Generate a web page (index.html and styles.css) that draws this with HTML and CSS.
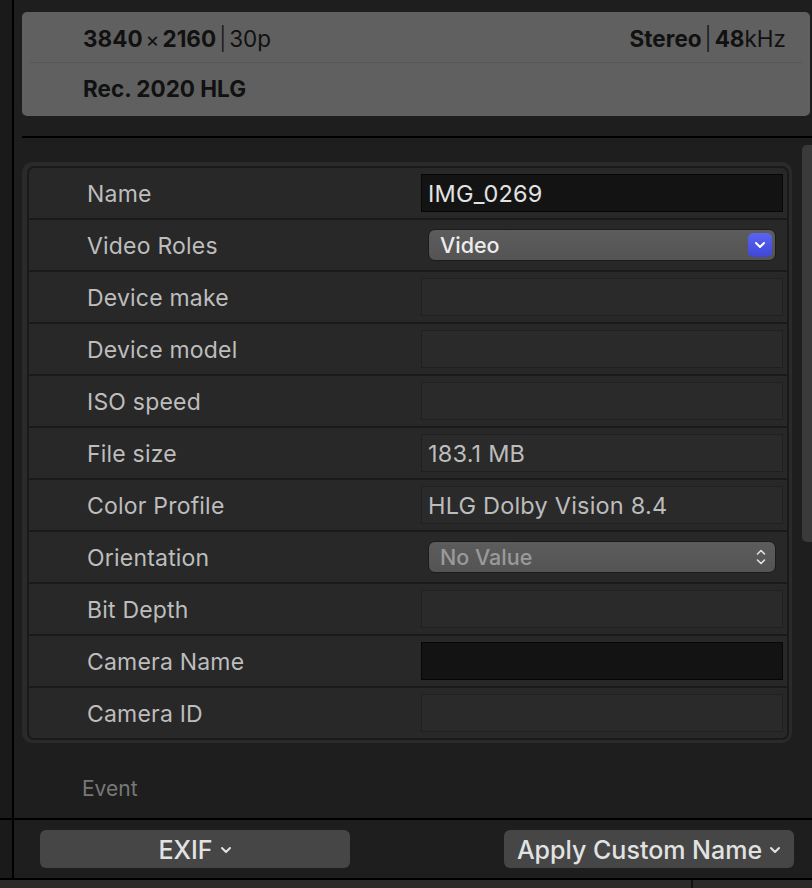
FILE: index.html
```html
<!DOCTYPE html>
<html lang="en">
<head>
    <meta charset="UTF-8">
    <meta name="viewport" content="width=device-width, initial-scale=1.0">
    <title>Inspector</title>
    <link rel="stylesheet" href="styles.css">
</head>
<body>
    <div class="top">
        <div class="side"></div>
        <div class="content">
            <div class="info">
                <div class="info-row">
                    <span><b>3840</b><span class="times">×</span><b>2160</b><span class="bar">|</span>30p</span>
                    <span><b>Stereo</b><span class="bar">|</span><b>48</b>kHz</span>
                </div>
                <div class="info-row">
                    <span><b>Rec. 2020 HLG</b></span>
                </div>
            </div>
            <div class="divider"></div>

            <div class="inspector">
                <div class="table">
                    <div class="rows">
                        <div class="row">
                            <div class="label">Name</div>
                            <div class="value"><div class="field dark">IMG_0269</div></div>
                        </div>
                        <div class="row">
                            <div class="label">Video Roles</div>
                            <div class="value">
                                <div class="popup">
                                    <span class="popup-text">Video</span>
                                    <span class="blue-btn">
                                        <svg width="12" height="8" viewBox="0 0 12 8"><path d="M2 2 L6 6 L10 2" fill="none" stroke="#fff" stroke-width="2" stroke-linecap="round" stroke-linejoin="round"/></svg>
                                    </span>
                                </div>
                            </div>
                        </div>
                        <div class="row">
                            <div class="label">Device make</div>
                            <div class="value"><div class="field"></div></div>
                        </div>
                        <div class="row">
                            <div class="label">Device model</div>
                            <div class="value"><div class="field"></div></div>
                        </div>
                        <div class="row">
                            <div class="label">ISO speed</div>
                            <div class="value"><div class="field"></div></div>
                        </div>
                        <div class="row">
                            <div class="label">File size</div>
                            <div class="value"><div class="field">183.1 MB</div></div>
                        </div>
                        <div class="row">
                            <div class="label">Color Profile</div>
                            <div class="value"><div class="field">HLG Dolby Vision 8.4</div></div>
                        </div>
                        <div class="row">
                            <div class="label">Orientation</div>
                            <div class="value">
                                <div class="popup">
                                    <span class="popup-text dim">No Value</span>
                                    <svg class="updown" width="12" height="20" viewBox="0 0 12 20"><path d="M2.5 7 L6 3.5 L9.5 7 M2.5 13 L6 16.5 L9.5 13" fill="none" stroke="#e0e0e0" stroke-width="1.6" stroke-linecap="round" stroke-linejoin="round"/></svg>
                                </div>
                            </div>
                        </div>
                        <div class="row">
                            <div class="label">Bit Depth</div>
                            <div class="value"><div class="field"></div></div>
                        </div>
                        <div class="row">
                            <div class="label">Camera Name</div>
                            <div class="value"><div class="field dark"></div></div>
                        </div>
                        <div class="row">
                            <div class="label">Camera ID</div>
                            <div class="value"><div class="field"></div></div>
                        </div>
                    </div>
                </div>
                <div class="scrollbar"></div>
            </div>

            <div class="event">Event</div>
        </div>
    </div>

    <div class="footer">
        <div class="side"></div>
        <div class="buttons">
            <button class="btn exif">EXIF <svg width="12" height="8" viewBox="0 0 12 8"><path d="M2 2 L6 6 L10 2" fill="none" stroke="#e2e2e2" stroke-width="2" stroke-linecap="round" stroke-linejoin="round"/></svg></button>
            <button class="btn apply">Apply Custom Name <svg width="12" height="8" viewBox="0 0 12 8"><path d="M2 2 L6 6 L10 2" fill="none" stroke="#e2e2e2" stroke-width="2" stroke-linecap="round" stroke-linejoin="round"/></svg></button>
        </div>
    </div>

    <div class="strip">
        <div class="strip-left"></div>
    </div>
</body>
</html>
```

FILE: styles.css
```css
body {
    margin: 0;
    padding: 0;
    width: 812px;
    height: 888px;
    overflow: hidden;
    background: #1e1e1e;
    font-family: Inter, "Noto Sans", sans-serif;
}

/* top area with inspector */
.top {
    display: flex;
    height: 818px;
    border-bottom: 2px solid #000;
}

.side {
    width: 12px;
    background: #1a1a1a;
    border-right: 2px solid #000;
    flex-shrink: 0;
}

.content {
    flex: 1;
    padding-left: 8px;
}

/* header box */
.info {
    margin-top: 12px;
    margin-right: 2px;
    height: 104px;
    background: #606060;
    border-radius: 5px;
    padding: 0 8px;
    box-sizing: border-box;
}

.info-row {
    height: 51px;
    display: flex;
    align-items: center;
    justify-content: space-between;
    padding: 0 16px 0 53px;
    font-size: 22.5px;
    color: #111;
}

.info-row:first-child {
    border-bottom: 1px solid #565656;
    height: 51px;
    padding-top: 2px;
    box-sizing: border-box;
}

.info-row b {
    font-weight: 700;
}

.times {
    font-size: 21px;
    margin: 0 3px;
}

.bar {
    margin: 0 3px;
    font-weight: 300;
}

.divider {
    margin-top: 20px;
    height: 2px;
    background: #000;
}

/* inspector table */
.inspector {
    display: flex;
    align-items: flex-start;
    padding-top: 7px;
}

.table {
    width: 770px;
    margin-top: 17px;
    background: #2a2a2a;
    border-radius: 10px;
    padding: 4px 3px 3px 5px;
    box-sizing: border-box;
}

.rows {
    border: 2px solid #1a1a1a;
    border-radius: 7px;
    background: #1a1a1a;
    display: flex;
    flex-direction: column;
    gap: 2px;
    overflow: hidden;
}

.row {
    height: 50px;
    background: #282828;
    display: flex;
    align-items: center;
}

.label {
    width: 392px;
    padding-left: 58px;
    padding-top: 2px;
    box-sizing: border-box;
    font-size: 23px;
    letter-spacing: 0.2px;
    color: #bdbdbd;
}

.value {
    flex: 1;
    padding-right: 4px;
}

.field {
    height: 38px;
    background: #2a2a2a;
    border: 1px solid #202020;
    box-sizing: border-box;
    padding-left: 6px;
    display: flex;
    align-items: center;
    font-size: 23.5px;
    letter-spacing: 0.2px;
    color: #bcbcbc;
}

.field.dark {
    background: #131313;
    border-color: #060606;
    color: #e2e2e2;
}

.popup {
    margin: 0 7px;
    height: 32px;
    background: linear-gradient(#5c5c5c, #545454);
    border: 1px solid #1c1c1c;
    border-radius: 7px;
    box-sizing: border-box;
    display: flex;
    align-items: center;
    justify-content: space-between;
    padding: 0 3px 0 11px;
}

.popup-text {
    font-size: 21.5px;
    font-weight: 500;
    color: #ececec;
}

.popup-text.dim {
    color: #9a9a9a;
}

.blue-btn {
    width: 24px;
    height: 24px;
    border-radius: 5px;
    background: linear-gradient(#5a63f2, #3e47d6);
    display: flex;
    align-items: center;
    justify-content: center;
}

.updown {
    margin-right: 5px;
}

.scrollbar {
    width: 10px;
    height: 397px;
    margin-left: 10px;
    background: #3a3a3a;
    border-radius: 5px 0 0 5px;
}

.event {
    margin-top: 33px;
    padding-left: 60px;
    font-size: 21px;
    color: #787878;
}

/* footer with buttons */
.footer {
    display: flex;
    height: 58px;
    border-bottom: 2px solid #000;
}

.buttons {
    flex: 1;
    display: flex;
    justify-content: space-between;
    align-items: center;
    padding: 0 18px 0 26px;
}

.btn {
    height: 38px;
    background: #464646;
    border: none;
    border-radius: 6px;
    color: #e2e2e2;
    font-family: Inter, "Noto Sans", sans-serif;
    font-size: 25px;
    font-weight: 500;
    display: flex;
    align-items: center;
    justify-content: center;
    gap: 7px;
    padding: 2px 10px 0;
}

.btn.exif {
    width: 310px;
}

.btn.apply {
    width: 290px;
}

.strip {
    height: 8px;
    background: #2a2a2a;
}

.strip-left {
    width: 691px;
    height: 8px;
    border-right: 2px solid #111;
}
```
